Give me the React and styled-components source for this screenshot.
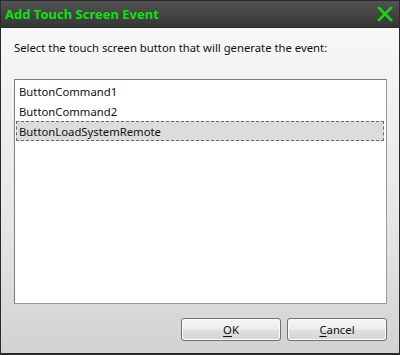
import React, { useState } from "react";
import styled, { createGlobalStyle } from "styled-components";

const Global = createGlobalStyle`
  html, body { margin: 0; padding: 0; background: #fff; }
  * { box-sizing: border-box; }
`;

const Window = styled.div`
  width: 400px;
  height: 355px;
  display: flex;
  flex-direction: column;
  background: #2c2c2c;
  border: 1px solid #2a2a2a;
  border-bottom-width: 2px;
  font-family: "Noto Sans", "Open Sans", sans-serif;
`;

const TitleBar = styled.div`
  height: 27px;
  flex: none;
  display: flex;
  align-items: center;
  justify-content: space-between;
  padding: 0 6px 0 4px;
  background: linear-gradient(#535353 0%, #454545 45%, #363636 100%);
  border-bottom: 1px solid #2a2a2a;
`;

const Title = styled.span`
  color: #0ee20e;
  font-weight: bold;
  font-size: 13px;
`;

const CloseIcon = () => (
  <svg width="16" height="16" viewBox="0 0 16 16">
    <path d="M2 2 L14 14 M14 2 L2 14" stroke="#14d814" strokeWidth="2.6" strokeLinecap="square" fill="none" />
  </svg>
);

const Body = styled.div`
  flex: 1;
  display: flex;
  flex-direction: column;
  padding: 12px;
  background: linear-gradient(#f7f7f7 0%, #e6e6e6 60%, #d2d2d2 100%);
`;

const Label = styled.div`
  font-size: 11.3px;
  line-height: 16px;
  color: #111;
  margin-left: 1px;
`;

const List = styled.div`
  flex: 1;
  margin-top: 23px;
  margin-left: 1px;
  background: #fff;
  border: 1px solid #7c7c7c;
  border-right-color: #9a9a9a;
  border-bottom-color: #9a9a9a;
  padding: 1px 2px 1px 1px;
`;

const Item = styled.div`
  height: 20px;
  line-height: 17px;
  padding: 1px 0 0 2px;
  font-size: 11.3px;
  color: #111;
  border: 1px ${p => (p.$selected ? "dashed #6a6a6a" : "solid transparent")};
  background: ${p => (p.$selected ? "#dcdcdc" : "transparent")};
`;

const Footer = styled.div`
  display: flex;
  justify-content: flex-end;
  gap: 6px;
  margin-top: 14px;
`;

const Button = styled.button`
  width: 100px;
  height: 23px;
  border: 1px solid #707070;
  border-radius: 3px;
  background: linear-gradient(#f6f6f6 0%, #ececec 50%, #dfdfdf 51%, #d6d6d6 100%);
  font-family: "Noto Sans", "Open Sans", sans-serif;
  font-size: 11.3px;
  color: #111;
  padding: 0;
  box-shadow: inset 0 0 0 1px #fbfbfb;
  u { text-decoration: underline; text-underline-offset: 2px; }
`;

const items = ["ButtonCommand1", "ButtonCommand2", "ButtonLoadSystemRemote"];

export default function App() {
  const [sel] = useState(2);
  return (
    <>
      <Global />
      <Window>
        <TitleBar>
          <Title>Add Touch Screen Event</Title>
          <CloseIcon />
        </TitleBar>
        <Body>
          <Label>Select the touch screen button that will generate the event:</Label>
          <List>
            {items.map((t, i) => (
              <Item key={t} $selected={i === sel}>{t}</Item>
            ))}
          </List>
          <Footer>
            <Button><u>O</u>K</Button>
            <Button><u>C</u>ancel</Button>
          </Footer>
        </Body>
      </Window>
    </>
  );
}
